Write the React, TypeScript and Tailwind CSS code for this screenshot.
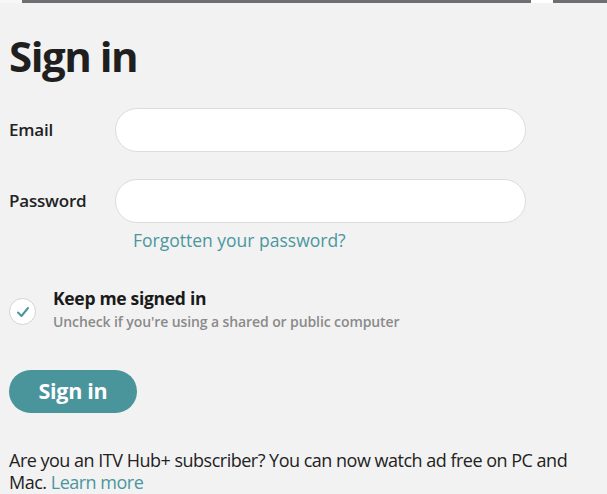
import React from "react";

export default function App() {
  const font = { fontFamily: '"Open Sans", "Noto Sans", sans-serif' };
  return (
    <div className="w-[607px] h-[494px] bg-[#f2f2f2] overflow-hidden text-[#222]" style={font}>
      <div className="flex h-[3px]">
        <div className="w-[22px] bg-[#f7f7f7]" />
        <div className="w-[509px] bg-[#6f6f73]" />
        <div className="w-[22px] bg-white" />
        <div className="flex-1 bg-[#6f6f73]" />
      </div>
      <div className="pl-[9px]">
        <h1 className="mt-[25px] text-[42px] leading-[56px] font-bold tracking-[-1.5px] text-[#1f1f1f]">Sign in</h1>
        <div className="mt-[24px] flex items-center">
          <label className="w-[106px] text-[17px] font-semibold tracking-[-0.2px]">Email</label>
          <div className="w-[411px] h-[44px] rounded-full bg-white border border-[#dcdcdc]" />
        </div>
        <div className="mt-[27px] flex items-center">
          <label className="w-[106px] text-[17px] font-semibold tracking-[-0.2px]">Password</label>
          <div className="w-[411px] h-[44px] rounded-full bg-white border border-[#dcdcdc]" />
        </div>
        <div className="pl-[124px] mt-[4px] text-[17.5px] leading-[26px] text-[#4a979e]">Forgotten your password?</div>
        <div className="mt-[33px] flex items-start">
          <div className="mt-[12px] w-[27px] h-[27px] rounded-full bg-white border border-[#d4d4d4] flex items-center justify-center">
            <svg width="16" height="16" viewBox="0 0 16 16">
              <path d="M3 8.5 L6.5 12 L13 4" fill="none" stroke="#4a979e" strokeWidth="2" strokeLinecap="round" strokeLinejoin="round" />
            </svg>
          </div>
          <div className="ml-[17px]">
            <div className="text-[17.5px] leading-[24px] font-bold tracking-[-0.3px] text-[#1a1a1a]">Keep me signed in</div>
            <div className="text-[14px] leading-[24px] font-semibold text-[#8a8a8a] tracking-[-0.1px]">Uncheck if you're using a shared or public computer</div>
          </div>
        </div>
        <button className="mt-[36px] w-[128px] h-[43px] rounded-full bg-[#4a959c] text-white text-[21.5px] font-bold tracking-[-0.3px]">
          Sign in
        </button>
        <p className="mt-[36px] pr-[20px] text-[18px] leading-[22px] tracking-[-0.5px] text-[#222]">
          Are you an ITV Hub+ subscriber? You can now watch ad free on PC and Mac.{" "}
          <span className="text-[#4a979e]">Learn more</span>
        </p>
      </div>
    </div>
  );
}
